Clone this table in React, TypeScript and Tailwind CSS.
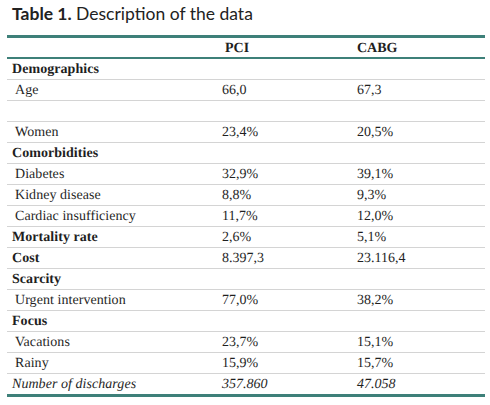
type Row = {
  label: string;
  pci?: string;
  cabg?: string;
  kind: "group" | "item" | "blank" | "total";
};

const rows: Row[] = [
  { label: "Demographics", kind: "group" },
  { label: "Age", pci: "66,0", cabg: "67,3", kind: "item" },
  { label: "", kind: "blank" },
  { label: "Women", pci: "23,4%", cabg: "20,5%", kind: "item" },
  { label: "Comorbidities", kind: "group" },
  { label: "Diabetes", pci: "32,9%", cabg: "39,1%", kind: "item" },
  { label: "Kidney disease", pci: "8,8%", cabg: "9,3%", kind: "item" },
  { label: "Cardiac insufficiency", pci: "11,7%", cabg: "12,0%", kind: "item" },
  { label: "Mortality rate", pci: "2,6%", cabg: "5,1%", kind: "group" },
  { label: "Cost", pci: "8.397,3", cabg: "23.116,4", kind: "group" },
  { label: "Scarcity", kind: "group" },
  { label: "Urgent intervention", pci: "77,0%", cabg: "38,2%", kind: "item" },
  { label: "Focus", kind: "group" },
  { label: "Vacations", pci: "23,7%", cabg: "15,1%", kind: "item" },
  { label: "Rainy", pci: "15,9%", cabg: "15,7%", kind: "item" },
  { label: "Number of discharges", pci: "357.860", cabg: "47.058", kind: "total" },
];

export default function App() {
  return (
    <div className="w-[490px] h-[405px] bg-white text-[#1f1f1f] overflow-hidden">
      <div className="pl-[7px] w-[485px]">
        <h1 className="h-[35px] pl-[5px] pt-[4px] text-[17.5px] leading-[20px] font-['Lato',sans-serif] text-[#222]">
          <span className="font-bold">Table 1.</span> Description of the data
        </h1>

        <div className="font-['Liberation_Serif','Times_New_Roman',serif] text-[14px] [text-rendering:geometricPrecision]">
          {/* header */}
          <div className="grid grid-cols-[215px_135px_1fr] border-t-[3px] border-b-2 border-[#3e8079] h-[24px] items-center font-bold">
            <div />
            <div className="pl-[3px]">PCI</div>
            <div>CABG</div>
          </div>

          {rows.map((r, i) => (
            <div
              key={i}
              className={
                "grid grid-cols-[215px_135px_1fr] items-center h-[21px] " +
                (i === rows.length - 1
                  ? "border-b-[3px] border-[#3e8079] h-[23px] italic"
                  : "border-b border-[#d4d4d4]")
              }
            >
              <span
                className={
                  "tracking-[0.05px] " +
                  (r.kind === "group"
                    ? "pl-[5px] font-bold"
                    : r.kind === "item"
                    ? "pl-[8px]"
                    : "pl-[5px]")
                }
              >
                {r.label}
              </span>
              <span>{r.pci}</span>
              <span>{r.cabg}</span>
            </div>
          ))}
        </div>
      </div>
    </div>
  );
}
